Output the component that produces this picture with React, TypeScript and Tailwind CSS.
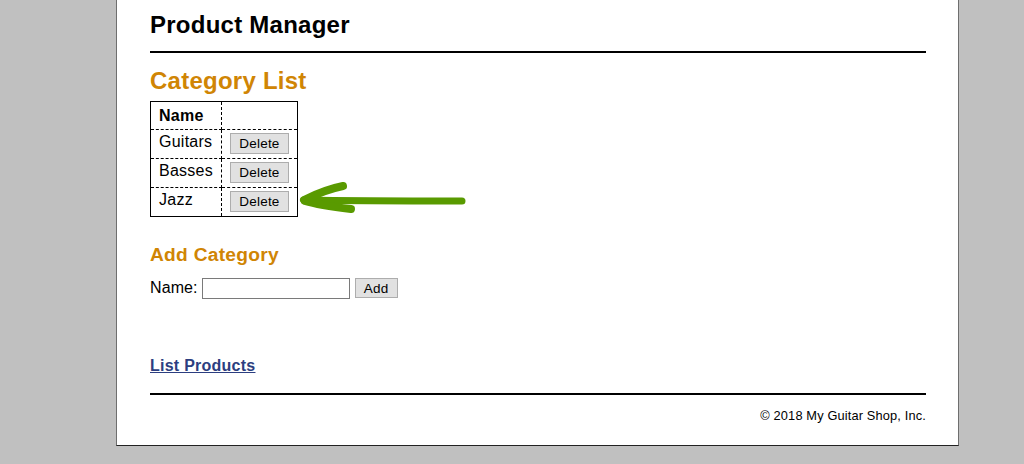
import React from "react";

const rows = ["Guitars", "Basses", "Jazz"];

export default function App() {
  return (
    <div className="relative min-h-[464px] bg-[#c0c0c0] font-['Liberation_Sans',Arial,sans-serif] text-black tracking-[0.25px]">
      <div className="ml-[116px] w-[843px] h-[446px] bg-white border-x border-b border-x-[#6e6e6e] border-b-[#222] pl-[33px] pr-[32px]">
        <header className="pt-[11px] pb-[12px] border-b-2 border-black">
          <h1 className="text-[24px] leading-[28px] font-bold">Product Manager</h1>
        </header>
        <main>
          <h1 className="pt-[14px] pb-[6px] text-[24px] leading-[28px] font-bold text-[#d08504]">
            Category List
          </h1>
          <table className="border-collapse border border-black text-[16px]">
            <thead>
              <tr>
                <th className="border border-dashed border-black px-[8px] pt-[4px] pb-[4px] leading-[19px] text-left align-top font-bold">
                  Name
                </th>
                <th className="border border-dashed border-black px-[8px] pt-[4px] pb-[4px] leading-[19px] text-left align-top">
                  &nbsp;
                </th>
              </tr>
            </thead>
            <tbody>
              {rows.map((r) => (
                <tr key={r}>
                  <td className="border border-dashed border-black px-[8px] pt-[3px] pb-[4px] leading-[18.4px] align-top">
                    {r}
                  </td>
                  <td className="border border-dashed border-black px-[8px] pt-[3px] pb-[4px] leading-[18.4px] align-top">
                    <button className="block w-[59px] h-[21px] bg-[#e1e1e1] border border-[#adadad] text-[13.5px] leading-[15px] text-black tracking-[0.2px]">
                      Delete
                    </button>
                  </td>
                </tr>
              ))}
            </tbody>
          </table>

          <h2 className="mt-[27px] text-[19.2px] leading-[22px] font-bold text-[#d08504]">
            Add Category
          </h2>
          <form className="mt-[11px] h-[22px] flex items-center" onSubmit={(e) => e.preventDefault()}>
            <label className="text-[16px] leading-[18.4px] tracking-[0.1px]">Name:</label>
            <input
              type="text"
              className="ml-[4px] w-[148px] h-[21px] border border-[#7a7a7a] bg-white px-[2px] text-[13.33px] outline-none"
            />
            <button className="ml-[5px] w-[43px] h-[20px] bg-[#e1e1e1] border border-[#adadad] text-[13.5px] leading-[15px] text-black tracking-[0.2px]">
              Add
            </button>
          </form>

          <p className="mt-[58px] leading-[18px] text-[16px]">
            <a href="#" className="font-bold text-[#2c3e80] underline">
              List Products
            </a>
          </p>
        </main>
        <footer className="mt-[18px] border-t-2 border-black">
          <p className="mt-[13px] text-right text-[12.8px] leading-[15px] tracking-[0.15px]">
            © 2018 My Guitar Shop, Inc.
          </p>
        </footer>
      </div>

      <svg
        className="absolute left-[296px] top-[178px]"
        width="176"
        height="40"
        viewBox="0 0 176 40"
        fill="none"
      >
        <path
          d="M8 22 C 60 23, 120 23, 166 23"
          stroke="#599a00"
          strokeWidth="7"
          strokeLinecap="round"
        />
        <path
          d="M8 22 C 20 16, 32 11, 47 8"
          stroke="#599a00"
          strokeWidth="8"
          strokeLinecap="round"
        />
        <path
          d="M9 23 C 22 27, 38 29, 55 31"
          stroke="#599a00"
          strokeWidth="8"
          strokeLinecap="round"
        />
      </svg>
    </div>
  );
}
